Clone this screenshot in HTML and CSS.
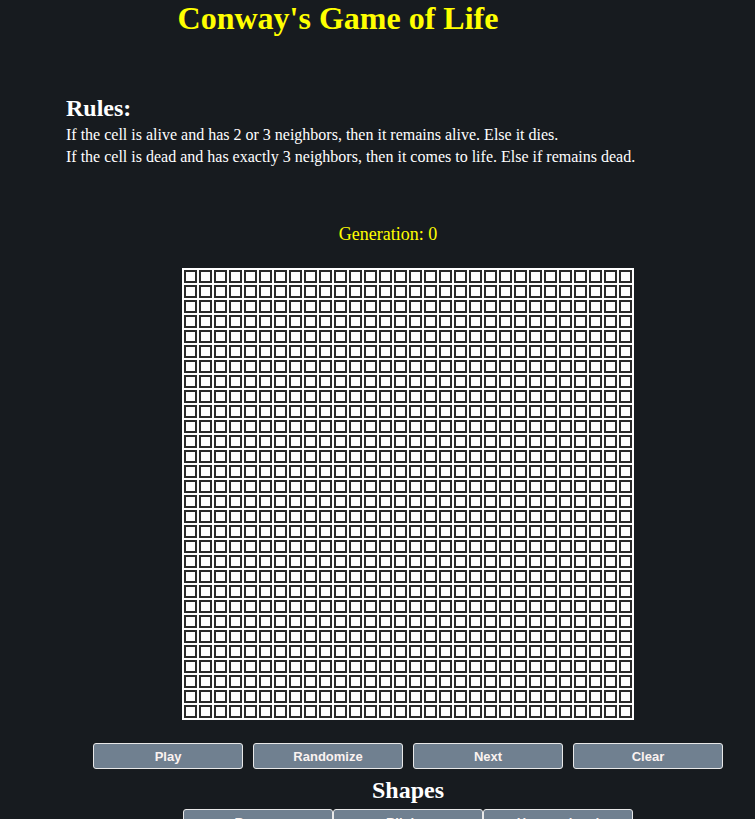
FILE: index.html
```html
<!DOCTYPE html>
<html lang="en">
<head>
<meta charset="utf-8">
<title>Conway's Game of Life</title>
<link rel="stylesheet" href="styles.css">
</head>
<body>
<header class="header">
  <h1 class="title">Conway's Game of Life</h1>
</header>
<section class="rules">
  <h2 class="rules-title">Rules:</h2>
  <p class="rules-text">If the cell is alive and has 2 or 3 neighbors, then it remains alive. Else it dies.</p>
  <p class="rules-text">If the cell is dead and has exactly 3 neighbors, then it comes to life. Else if remains dead.</p>
</section>
<main class="game">
  <div class="generation">Generation: 0</div>
  <div class="board" id="board"></div>
  <div class="controls">
    <button class="btn">Play</button>
    <button class="btn">Randomize</button>
    <button class="btn">Next</button>
    <button class="btn">Clear</button>
  </div>
  <h2 class="shapes-title">Shapes</h2>
  <div class="shapes">
    <button class="btn shape-btn">Beacon</button>
    <button class="btn shape-btn">Blinker</button>
    <button class="btn shape-btn">Hammerhead</button>
  </div>
</main>
<script src="script.js"></script>
</body>
</html>
```
FILE: styles.css
```css
html, body {
  margin: 0;
  padding: 0;
  background: #171b1f;
  color: #ffffff;
  font-family: "Liberation Serif", "Times New Roman", serif;
}
body {
  height: 819px;
  overflow: hidden;
}
.header {
  width: 676px;
  text-align: center;
}
.title {
  margin: 0;
  font-size: 32px;
  line-height: 37px;
  font-weight: bold;
  color: #ffff00;
}
.rules {
  padding-left: 66px;
  margin-top: 57px;
}
.rules-title {
  margin: 0 0 2px 0;
  font-size: 24px;
  line-height: 28px;
  font-weight: bold;
}
.rules-text {
  margin: 0;
  font-size: 16px;
  line-height: 22px;
}
.game {
  margin-left: 93px;
  width: 630px;
  display: flex;
  flex-direction: column;
  align-items: center;
}
.generation {
  margin-top: 56px;
  padding-right: 40px;
  font-size: 18px;
  line-height: 20px;
  color: #ffff00;
}
.board {
  margin-top: 24px;
  display: grid;
  grid-template-columns: repeat(30, 13px);
  grid-auto-rows: 13px;
  gap: 2px;
  padding: 2px;
  background: #ffffff;
}
.cell {
  box-sizing: border-box;
  width: 13px;
  height: 13px;
  border: 2px solid #2a2a2a;
  background: #ffffff;
}
.cell.alive {
  background: #2a2a2a;
}
.controls {
  margin-top: 23px;
  display: flex;
  gap: 10px;
}
.btn {
  box-sizing: border-box;
  width: 150px;
  height: 26px;
  padding: 0;
  border: 1px solid #e8e8e8;
  border-radius: 3px;
  background: #708090;
  color: #fbf3f0;
  font-family: "Liberation Sans", Arial, sans-serif;
  font-size: 13px;
  font-weight: bold;
}
.shapes-title {
  margin: 2px 0 0 0;
  font-size: 24px;
  line-height: 38px;
  font-weight: bold;
}
.shapes {
  display: flex;
}
.shape-btn {
  height: 26px;
}
```
FILE: script.js
```js
(function () {
  var board = document.getElementById('board');
  var frag = document.createDocumentFragment();
  for (var i = 0; i < 900; i++) {
    var c = document.createElement('div');
    c.className = 'cell';
    frag.appendChild(c);
  }
  board.appendChild(frag);
})();
```
